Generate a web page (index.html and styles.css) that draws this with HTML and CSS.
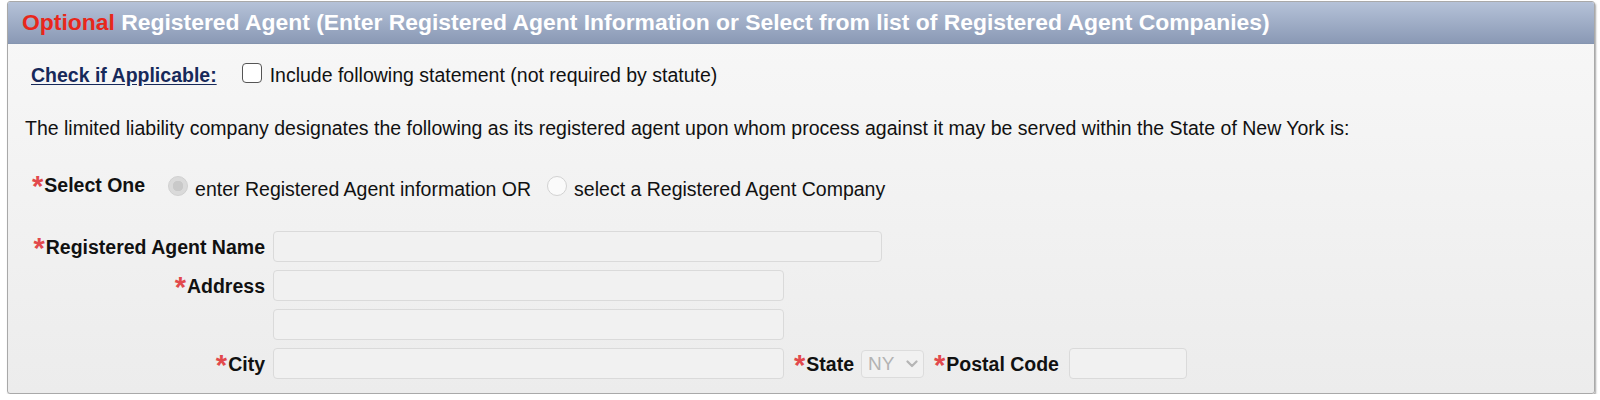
FILE: index.html
```html
<!DOCTYPE html>
<html>
<head>
<meta charset="utf-8">
<link rel="stylesheet" href="styles.css">
</head>
<body>
<div class="panel">
  <div class="panel-head"><span class="opt">Optional</span> Registered Agent (Enter Registered Agent Information or Select from list of Registered Agent Companies)</div>
  <div class="panel-body">
    <div class="check-row">
      <span class="applicable">Check if Applicable:</span>
      <span class="checkbox"></span>
      <span class="check-label">Include following statement (not required by statute)</span>
    </div>
    <p class="statement">The limited liability company designates the following as its registered agent upon whom process against it may be served within the State of New York is:</p>
    <div class="select-row">
      <span class="lbl"><span class="req">*</span>Select One</span>
      <span class="radio checked"></span><span class="radio-label">enter Registered Agent information OR</span>
      <span class="radio"></span><span class="radio-label">select a Registered Agent Company</span>
    </div>
    <div class="form-grid">
      <span class="lbl right"><span class="req">*</span>Registered Agent Name</span>
      <span class="input w-name"></span>
      <span class="lbl right"><span class="req">*</span>Address</span>
      <span class="input w-addr"></span>
      <span></span>
      <span class="input w-addr"></span>
      <span class="lbl right"><span class="req">*</span>City</span>
      <div class="city-row">
        <span class="input w-addr"></span>
        <span class="lbl state-lbl"><span class="req">*</span>State</span>
        <span class="select">NY<svg class="chev" width="12" height="8" viewBox="0 0 12 8"><path d="M1.5 1.5 L6 6 L10.5 1.5" fill="none" stroke="#b5b5b5" stroke-width="2.2" stroke-linecap="round" stroke-linejoin="round"/></svg></span>
        <span class="lbl postal-lbl"><span class="req">*</span>Postal Code</span>
        <span class="input w-postal"></span>
      </div>
    </div>
  </div>
</div>
</body>
</html>
```
FILE: styles.css
```css
html, body {
  margin: 0;
  padding: 0;
  background: #ffffff;
}
body {
  font-family: "Liberation Sans", Arial, sans-serif;
  color: #111;
}
.panel {
  margin: 1px 0 0 7px;
  width: 1586px;
  border: 1px solid #a9a9a9;
  border-radius: 3px;
  box-shadow: 1px 2px 2px rgba(0, 0, 0, 0.35);
  overflow: hidden;
  background: linear-gradient(#f8f8f8, #ececec);
}
.panel-head {
  height: 42px;
  line-height: 40px;
  padding-left: 14px;
  background: linear-gradient(#b5c2d8, #8a99b5);
  color: #fff;
  font-size: 22.9px;
  font-weight: bold;
  white-space: nowrap;
  border-bottom: 1px solid #8595b0;
  box-sizing: border-box;
}
.opt {
  color: #e8271b;
}
.panel-body {
  padding: 20px 0 14px 0;
  font-size: 19.5px;
  line-height: 22px;
}
.check-row {
  display: flex;
  align-items: center;
  padding-left: 23px;
}
.applicable {
  font-weight: bold;
  color: #17295a;
  text-decoration: underline;
  text-underline-offset: 2px;
}
.checkbox {
  width: 18px;
  height: 18px;
  border: 1.5px solid #555;
  border-radius: 4px;
  background: #fff;
  margin: -4px 8px 0 25px;
}
.statement {
  margin: 31px 0 0 17px;
}
.select-row {
  display: flex;
  align-items: flex-start;
  margin: 35px 0 0 24px;
}
.lbl {
  font-weight: bold;
  white-space: nowrap;
}
.req {
  color: #e2494c;
  font-size: 29px;
  font-weight: bold;
  vertical-align: -4px;
  line-height: 0;
  margin-right: 1px;
}
.radio {
  width: 18px;
  height: 18px;
  border-radius: 50%;
  border: 1px solid #d2d2d2;
  background: #fafafa;
  margin: 2px 7px 0 0;
  box-sizing: content-box;
  flex: none;
}
.radio.checked {
  background: radial-gradient(circle, #c9c9c9 0 5px, #dadada 5.5px);
  border-color: #d0d0d0;
  margin-left: 23px;
}
.radio-label {
  margin-top: 4px;
  margin-right: 16px;
}
.form-grid {
  display: grid;
  grid-template-columns: 233px auto;
  column-gap: 8px;
  row-gap: 8px;
  margin: 31px 0 0 24px;
  align-items: center;
}
.right {
  text-align: right;
}
.input {
  display: block;
  height: 29px;
  border: 1px solid #dadada;
  border-radius: 4px;
  background: #f1f1f1;
}
.w-name { width: 607px; }
.w-addr { width: 509px; }
.w-postal { width: 116px; }
.city-row {
  display: flex;
  align-items: center;
}
.state-lbl {
  margin-left: 10px;
}
.select {
  display: flex;
  align-items: center;
  justify-content: space-between;
  box-sizing: border-box;
  width: 63px;
  height: 28px;
  margin-left: 7px;
  padding: 0 5px 0 6px;
  border: 1px solid #dcdcdc;
  border-radius: 4px;
  background: #f1f1f1;
  color: #b3b3b3;
  font-size: 19px;
}
.chev {
  margin-top: 1px;
}
.postal-lbl {
  margin-left: 10px;
  margin-right: 10px;
}
```
